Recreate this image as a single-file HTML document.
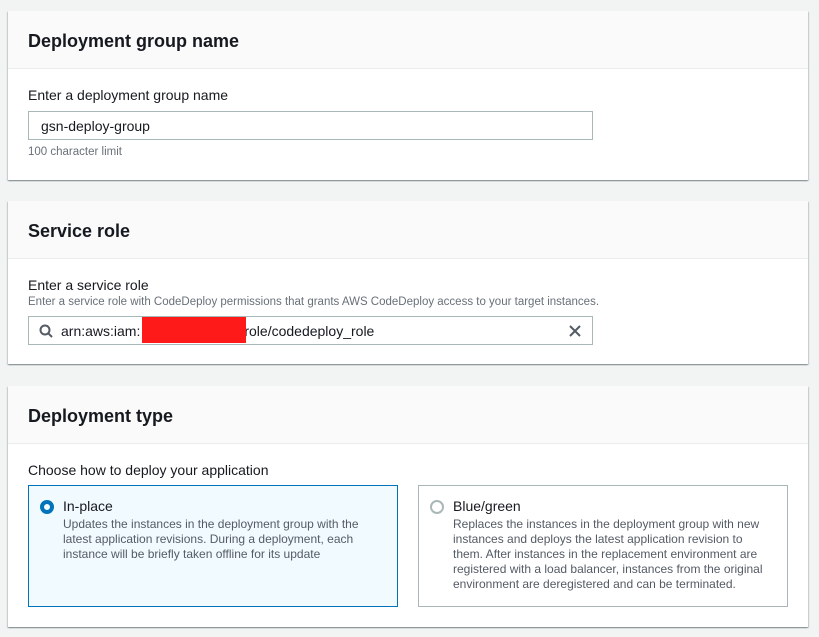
<!DOCTYPE html><html><head><style>
*{box-sizing:border-box;margin:0;padding:0}
body{width:819px;height:637px;background:#f2f3f3;font-family:"Liberation Sans",sans-serif;color:#16191f;position:relative;overflow:hidden}
.p{position:absolute;left:8px;width:800px;background:#fff;box-shadow:0 1px 1px rgba(0,28,36,.3),1px 1px 1px rgba(0,28,36,.15),-1px 1px 1px rgba(0,28,36,.15)}
.h{height:58px;background:#fafafa;border-bottom:1px solid #eaeded;padding:20px 20px 0;font-size:18px;font-weight:bold}
.a{position:absolute;font-size:14px}
.s{position:absolute;font-size:11.5px;color:#687078}
.in{position:absolute;left:20px;width:565px;height:29px;border:1px solid #aab7b8;font-size:14px;padding:6px 12px}
.c{position:absolute;top:99px;width:370px;height:122px;border:1px solid #aab7b8;padding:12px 20px 0 34px}
.c b{font-weight:normal;font-size:14px;display:block;margin-bottom:3px}
.c span{font-size:12px;color:#545b64;line-height:15px;display:block}
.r{position:absolute;left:11px;top:14px;width:14px;height:14px;border-radius:50%;border:2px solid #aab7b8}
</style></head><body>
<div class="p" style="top:11px;height:169px"><div class="h">Deployment group name</div>
<div class="a" style="left:20px;top:76px">Enter a deployment group name</div>
<div class="in" style="top:100px">gsn-deploy-group</div>
<div class="s" style="left:20px;top:135px">100 character limit</div></div>
<div class="p" style="top:201px;height:163px"><div class="h">Service role</div>
<div class="a" style="left:20px;top:76px">Enter a service role</div>
<div class="s" style="left:20px;top:95px">Enter a service role with CodeDeploy permissions that grants AWS CodeDeploy access to your target instances.</div>
<div class="in" style="top:115px;padding-left:32px">arn:aws:iam:<span style="display:inline-block;width:104px"></span>role/codedeploy_role
<div style="position:absolute;left:113px;top:0;width:104px;height:26px;background:#ff1a1a"></div>
<svg style="position:absolute;left:10px;top:7px" width="14" height="14" viewBox="0 0 14 14"><circle cx="6" cy="6" r="4.5" fill="none" stroke="#545b64" stroke-width="2"/><path d="M9.3 9.3L13 13" stroke="#545b64" stroke-width="2"/></svg>
<svg style="position:absolute;right:10px;top:7px" width="14" height="14" viewBox="0 0 14 14"><path d="M2 2L12 12M12 2L2 12" stroke="#545b64" stroke-width="2"/></svg></div></div>
<div class="p" style="top:386px;height:241px"><div class="h">Deployment type</div>
<div class="a" style="left:20px;top:76px">Choose how to deploy your application</div>
<div class="c" style="left:20px;background:#f1faff;border-color:#0073bb"><div class="r" style="border:4px solid #0073bb"></div><b>In-place</b><span>Updates the instances in the deployment group with the latest application revisions. During a deployment, each instance will be briefly taken offline for its update</span></div>
<div class="c" style="left:410px"><div class="r"></div><b>Blue/green</b><span>Replaces the instances in the deployment group with new instances and deploys the latest application revision to them. After instances in the replacement environment are registered with a load balancer, instances from the original environment are deregistered and can be terminated.</span></div>
</div>
</body></html>
